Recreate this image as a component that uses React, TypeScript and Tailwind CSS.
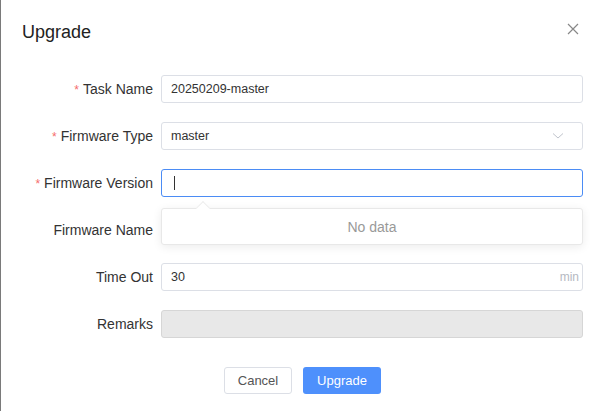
import React from 'react';

type Row = {
  label: string;
  required?: boolean;
  field: React.ReactNode;
};

const inputBase =
  'flex h-[28px] w-[422px] items-center rounded-[3px] border px-[9px] text-[12.5px] text-[#333]';

export default function App() {
  const rows: Row[] = [
    {
      label: 'Task Name',
      required: true,
      field: <div className={`${inputBase} border-[#dcdfe6] bg-white`}>20250209-master</div>,
    },
    {
      label: 'Firmware Type',
      required: true,
      field: (
        <div className={`${inputBase} justify-between border-[#dcdfe6] bg-white`}>
          <span>master</span>
          <svg width="12" height="8" viewBox="0 0 12 8" className="mr-[9px]">
            <path d="M1 1.5 L6 6 L11 1.5" fill="none" stroke="#c0c4cc" strokeWidth="1" />
          </svg>
        </div>
      ),
    },
    {
      label: 'Firmware Version',
      required: true,
      field: (
        <div className="relative">
          <div className={`${inputBase} border-[#4b8cf5] bg-white`}>
            <span className="ml-[3px] h-[14px] w-px bg-[#333]" />
          </div>
          {/* Dropdown popup */}
          <div className="absolute left-0 top-[39px] z-10 flex h-[37px] w-[422px] items-center justify-center rounded-[3px] border border-[#e8e8e8] bg-white pt-[2px] text-[14px] text-[#999] shadow-[0_2px_10px_rgba(0,0,0,0.08)]">
            No data
            <span className="absolute left-[36px] top-[-6px] h-[10px] w-[10px] rotate-45 border-l border-t border-[#eee] bg-white" />
          </div>
        </div>
      ),
    },
    {
      label: 'Firmware Name',
      field: <div className={`${inputBase} border-[#dcdfe6] bg-white`} />,
    },
    {
      label: 'Time Out',
      field: (
        <div className={`${inputBase} justify-between border-[#dcdfe6] bg-white pr-[3px]`}>
          <span>30</span>
          <span className="text-[12px] text-[#b5b9c2]">min</span>
        </div>
      ),
    },
    {
      label: 'Remarks',
      field: <div className={`${inputBase} border-[#d6d6d6] bg-[#e8e8e8]`} />,
    },
  ];

  return (
    <div
      className="relative h-[411px] w-[590px] overflow-hidden border-l border-[#7a7a7a] bg-white"
      style={{ fontFamily: '"Liberation Sans", Arial, sans-serif' }}
    >
      {/* Header */}
      <div className="flex items-center justify-between pl-[21px] pr-[11px] pt-[20px]">
        <h2 className="text-[18px] leading-[24px] text-[#222]">Upgrade</h2>
        <svg width="12" height="12" viewBox="0 0 12 12" className="mb-[6px]">
          <path d="M1 1 L11 11 M11 1 L1 11" stroke="#888" strokeWidth="1.2" />
        </svg>
      </div>

      {/* Form */}
      <div className="mt-[31px] flex flex-col gap-[19px]">
        {rows.map((row) => (
          <div key={row.label} className="flex items-center">
            <label className="w-[160px] pr-[8px] text-right text-[14px] text-[#333]">
              {row.required && <span className="mr-[4px] text-[12px] text-[#f56c6c]">*</span>}
              {row.label}
            </label>
            {row.field}
          </div>
        ))}
      </div>

      {/* Footer */}
      <div className="mt-[29px] flex justify-center gap-[11px] pl-[14px]">
        <button className="h-[27px] w-[68px] rounded-[3px] border border-[#dcdfe6] bg-white text-[13px] text-[#555]">
          Cancel
        </button>
        <button className="h-[27px] w-[78px] rounded-[3px] bg-[#4e90fc] text-[13px] text-white">
          Upgrade
        </button>
      </div>
    </div>
  );
}
